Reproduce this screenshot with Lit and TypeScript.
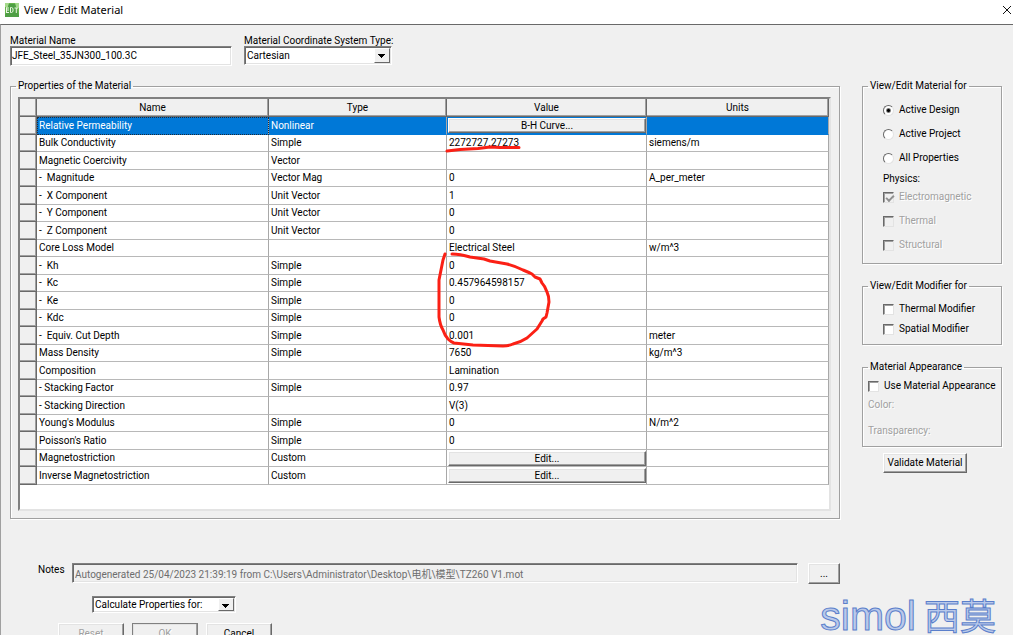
import { LitElement, html, css, nothing } from "lit";
import { customElement, property } from "lit/decorators.js";

type Row = { name: string; type?: string; value?: string; units?: string; edit?: boolean; selected?: boolean };

const ROWS: Row[] = [
  { name: "Relative Permeability", type: "Nonlinear", value: "B-H Curve...", edit: true, selected: true },
  { name: "Bulk Conductivity", type: "Simple", value: "2272727.27273", units: "siemens/m" },
  { name: "Magnetic Coercivity", type: "Vector" },
  { name: "-  Magnitude", type: "Vector Mag", value: "0", units: "A_per_meter" },
  { name: "-  X Component", type: "Unit Vector", value: "1" },
  { name: "-  Y Component", type: "Unit Vector", value: "0" },
  { name: "-  Z Component", type: "Unit Vector", value: "0" },
  { name: "Core Loss Model", value: "Electrical Steel", units: "w/m^3" },
  { name: "-  Kh", type: "Simple", value: "0" },
  { name: "-  Kc", type: "Simple", value: "0.457964598157" },
  { name: "-  Ke", type: "Simple", value: "0" },
  { name: "-  Kdc", type: "Simple", value: "0" },
  { name: "-  Equiv. Cut Depth", type: "Simple", value: "0.001", units: "meter" },
  { name: "Mass Density", type: "Simple", value: "7650", units: "kg/m^3" },
  { name: "Composition", value: "Lamination" },
  { name: "- Stacking Factor", type: "Simple", value: "0.97" },
  { name: "- Stacking Direction", value: "V(3)" },
  { name: "Young's Modulus", type: "Simple", value: "0", units: "N/m^2" },
  { name: "Poisson's Ratio", type: "Simple", value: "0" },
  { name: "Magnetostriction", type: "Custom", value: "Edit...", edit: true },
  { name: "Inverse Magnetostriction", type: "Custom", value: "Edit...", edit: true },
];

const base = css`
  * { box-sizing: border-box; }
  button, input, select {
    font: inherit;
    color: inherit;
    margin: 0;
    border-radius: 0;
    appearance: none;
    outline: none;
  }
  button {
    display: block;
    padding: 0;
    background: #f0f0f0;
    border: 1px solid;
    border-color: #fff #696969 #696969 #fff;
    box-shadow: inset -1px -1px #a0a0a0, inset 1px 1px #e3e3e3;
    text-align: center;
    white-space: nowrap;
  }
`;

@customElement("material-table")
class MaterialTable extends LitElement {
  static styles = [
    base,
    css`
      :host { display: block; }
      .panel {
        background: #fff;
        border: 2px solid;
        border-color: #808080 #e3e3e3 #e3e3e3 #808080;
        padding-bottom: 24px;
      }
      table {
        width: 100%;
        table-layout: fixed;
        border-collapse: separate;
        border-spacing: 0;
      }
      .c-head { width: 17px; }
      .c-type { width: 178px; }
      .c-value { width: 200px; }
      .c-units { width: 182px; }
      th {
        height: 18px;
        padding: 0;
        font-weight: normal;
        line-height: 16px;
        background: #f0f0f0;
        border-right: 1px solid #696969;
        border-bottom: 1px solid #696969;
        box-shadow: inset -1px -1px #a0a0a0;
      }
      .value { position: relative; }
      tbody tr { height: 17px; }
      tbody tr:nth-child(odd) { height: 18px; }
      td {
        padding: 0 1px 0 2px;
        line-height: 14px;
        white-space: pre;
        border-right: 1px solid #a8a8a8;
        border-bottom: 1px solid #b8b8b8;
      }
      tbody th { height: auto; }
      .selected td { background: #0078d7; color: #fff; border-bottom-color: #0078d7; }
      .selected .name { outline: 1px dotted #1c2a3a; outline-offset: -1px; }
      .has-button { padding: 0 0 0 1px; }
      .has-button button { width: 100%; height: 15px; line-height: 11px; color: #000; }
      .mark {
        position: absolute;
        left: -11px;
        top: 0;
        z-index: 1;
        pointer-events: none;
        fill: none;
        stroke: #fb2015;
        stroke-width: 3;
        stroke-linecap: round;
        stroke-linejoin: round;
      }
    `,
  ];

  render() {
    return html`
      <div class="panel">
        <table>
          <colgroup>
            <col class="c-head" /><col /><col class="c-type" /><col class="c-value" /><col class="c-units" />
          </colgroup>
          <thead>
            <tr>
              <th></th><th>Name</th><th>Type</th>
              <th class="value">
                Value
                <svg class="mark" width="120" height="255" aria-hidden="true">
                  <path d="M11 52 L24 50.500 L42 49.500 L54 48 L64 48.500 L83 48.500" />
                  <path d="M9 155 L7 161 L3 181 L3 218 Q4 226 7 231 Q9 237 12 240 Q15 243 18 244 L37 246 L67 247 Q73 247 77 245 Q85 243 91 239 L101 230 L106 222 L107 220 L110 218 L111 214 L113 203 Q113 197 111 193 Q109 187 106 184 L104 180 L99 178 L96 175 Q92 173 87 171 Q79 167 71 165 L54 162 L48 160 L34 158 Q24 155 16 155" />
                </svg>
              </th>
              <th>Units</th>
            </tr>
          </thead>
          <tbody>
            ${ROWS.map(
              (r) => html`<tr class=${r.selected ? "selected" : ""}>
                <th></th>
                <td class="name">${r.name}</td>
                <td>${r.type ?? nothing}</td>
                ${r.edit
                  ? html`<td class="has-button"><button type="button">${r.value}</button></td>`
                  : html`<td>${r.value ?? nothing}</td>`}
                <td>${r.units ?? nothing}</td>
              </tr>`
            )}
          </tbody>
        </table>
      </div>
    `;
  }
}

@customElement("app-root")
class AppRoot extends LitElement {
  @property() materialName = "JFE_Steel_35JN300_100.3C";

  static styles = [
    base,
    css`
      :host {
        display: block;
        height: 100vh;
        overflow: hidden;
        position: relative;
        background: #f0f0f0;
        color: #000;
        font: 10px/12px Roboto, "Liberation Sans", "Noto Sans CJK SC", sans-serif;
      }
      .titlebar {
        display: flex;
        align-items: center;
        height: 24px;
        padding: 0 0 4px 5px;
        gap: 5px;
        background: #fff;
        font: 11px/16px "Noto Sans", sans-serif;
      }
      .titlebar h1 { margin: 0; font: inherit; flex: 1; }
      .titlebar .close {
        width: 14px;
        height: 14px;
        background: none;
        border: 0;
        box-shadow: none;
      }
      .titlebar svg { display: block; }
      .body {
        border-top: 1px solid #696969;
        border-left: 1px solid #a0a0a0;
        min-height: calc(100vh - 24px);
        padding: 10px 11px 0 9px;
      }
      .top { display: flex; gap: 12px; margin-bottom: 14px; }
      .field label { display: block; line-height: 11px; white-space: nowrap; }
      .sunken {
        display: block;
        background: #fff;
        border: 1px solid;
        border-color: #808080 #fff #fff #808080;
        box-shadow: inset 1px 1px #696969, inset -1px -1px #e3e3e3;
      }
      .name-input { width: 222px; height: 20px; padding: 0 2px 2px 1px; }
      .combo { position: relative; width: 148px; }
      .combo select { width: 100%; height: 19px; padding: 0 20px 0 2px; }
      .combo::after {
        content: "";
        position: absolute;
        right: 2px;
        top: 2px;
        bottom: 2px;
        width: 14px;
        pointer-events: none;
        border: 1px solid;
        border-color: #fff #696969 #696969 #fff;
        background: linear-gradient(#000, #000) 3px 5px / 7px 1px no-repeat,
          linear-gradient(#000, #000) 4px 6px / 5px 1px no-repeat,
          linear-gradient(#000, #000) 5px 7px / 3px 1px no-repeat,
          linear-gradient(#000, #000) 6px 8px / 1px 1px no-repeat, #f0f0f0;
      }
      .columns { display: grid; grid-template-columns: minmax(0, 1fr) 140px; column-gap: 22px; }
      fieldset {
        margin: 0;
        min-width: 0;
        border: 1px solid #a0a0a0;
        box-shadow: 1px 1px #fff, inset 1px 1px #fff;
        padding: 0;
      }
      legend { padding: 0 2px; margin-left: 5px; line-height: 12px; }
      .properties { padding: 5px 8px 7px 7px; }
      .side { display: flex; flex-direction: column; gap: 16px; }
      .option { display: flex; align-items: center; gap: 5px; height: 12px; white-space: nowrap; }
      .scope { padding: 12px 0 12px 20px; }
      .stack { display: grid; gap: 12px; }
      .physics { margin: 9px 0 6px; }
      .modifier { padding: 11px 0 9px 20px; display: grid; gap: 8px; }
      .appearance { padding: 7px 0 9px 5px; }
      .appearance .color { margin: 7px 0 14px; }
      .off { color: #a0a0a0; text-shadow: 1px 1px #fff; }
      input[type="checkbox"] {
        width: 11px;
        height: 11px;
        flex: none;
        background: #fff;
        border: 1px solid;
        border-color: #696969 #e3e3e3 #e3e3e3 #696969;
        box-shadow: inset 1px 1px #a0a0a0;
      }
      input[type="checkbox"]:disabled { background: #f0f0f0; }
      input[type="checkbox"]:checked::before {
        content: "";
        display: block;
        width: 6px;
        height: 3px;
        margin: 2px 0 0 2px;
        border: solid #909090;
        border-width: 0 0 2px 2px;
        transform: rotate(-45deg);
      }
      input[type="radio"] {
        width: 11px;
        height: 11px;
        flex: none;
        border-radius: 50%;
        background: #fff;
        border: 1px solid;
        border-color: #696969 #e3e3e3 #e3e3e3 #696969;
      }
      input[type="radio"]:checked { background: radial-gradient(circle, #000 1px, #fff 3px); }
      .validate { width: 84px; height: 20px; margin: -10px 0 0 21px; }
      .notes { display: flex; align-items: flex-start; margin: 44px 0 12px; padding-left: 28px; }
      .notes label { width: 34px; padding-top: 1px; }
      .notes input { flex: 1; min-width: 0; height: 20px; padding: 0 2px; background: #f0f0f0; color: #6d6d6d; }
      .notes button { width: 32px; height: 21px; margin-left: 10px; }
      .calc { width: 144px; margin: 0 0 10px 82px; }
      .calc select { height: 17px; }
      .actions { display: flex; gap: 8px; padding-left: 48px; }
      .actions button { width: 66px; height: 21px; }
      .actions button:disabled { color: #a0a0a0; text-shadow: 1px 1px #fff; }
      .actions .ok { border-color: #808080; }
      .brand {
        position: absolute;
        right: 17px;
        bottom: 0;
        display: flex;
        align-items: baseline;
        gap: 8px;
        color: #b9c9ea;
        -webkit-text-stroke: 1px #5b7fcb;
        font: 41px/38px "Liberation Sans", Arial, sans-serif;
      }
      .brand .cjk { font: 36px/38px "Noto Sans CJK SC", sans-serif; }
    `,
  ];

  private check(label: string, disabled = false, checked = false) {
    return html`<label class="option ${disabled ? "off" : ""}">
      <input type="checkbox" ?disabled=${disabled} ?checked=${checked} />${label}</label>`;
  }

  private radio(label: string, checked = false) {
    return html`<label class="option"><input type="radio" name="scope" ?checked=${checked} />${label}</label>`;
  }

  render() {
    return html`
      <header class="titlebar">
        <svg width="14" height="14" viewBox="0 0 14 14" aria-hidden="true">
          <rect width="14" height="14" fill="#69b64c" />
          <path d="M0 0 H4 L3 4 H0 Z M10 0 H14 V5 L11 4 Z" fill="#a5d98c" />
          <path d="M4 1 H10 L14 12 V14 H0 V12 Z" fill="#4f9f45" />
          <path d="M1.500 4.500 V9.500 M1 5 H4 M1 7 H4 M1 9.500 H4 M5.500 4.500 V9.500 H6.500 L8 8.500 V5.500 L6.500 4.500 Z M9.500 5 H13 M11.300 5 V10" fill="none" stroke="#eaf8e2" />
        </svg>
        <h1>View / Edit Material</h1>
        <button class="close" type="button" aria-label="Close">
          <svg width="14" height="14" viewBox="0 0 14 14"><path d="M4 3 L12 11 M12 3 L4 11" stroke="#111" fill="none" /></svg>
        </button>
      </header>
      <main class="body">
        <div class="top">
          <div class="field">
            <label for="name">Material Name</label>
            <input id="name" class="sunken name-input" .value=${this.materialName} />
          </div>
          <div class="field">
            <label for="coords">Material Coordinate System Type:</label>
            <div class="combo">
              <select id="coords" class="sunken"><option>Cartesian</option></select>
            </div>
          </div>
        </div>
        <div class="columns">
          <div>
            <fieldset>
              <legend>Properties of the Material</legend>
              <div class="properties"><material-table></material-table></div>
            </fieldset>
            <div class="notes">
              <label for="notes">Notes</label>
              <input id="notes" class="sunken" readonly
                value="Autogenerated 25/04/2023 21:39:19 from C:\\Users\\Administrator\\Desktop\\电机\\模型\\TZ260 V1.mot" />
              <button type="button">...</button>
            </div>
            <div class="combo calc">
              <select class="sunken" aria-label="Calculate Properties for"><option>Calculate Properties for:</option></select>
            </div>
            <div class="actions">
              <button type="button" disabled>Reset</button>
              <button type="button" class="ok" disabled>OK</button>
              <button type="button">Cancel</button>
            </div>
          </div>
          <div class="side">
            <fieldset>
              <legend>View/Edit Material for</legend>
              <div class="scope">
                <div class="stack">
                  ${this.radio("Active Design", true)} ${this.radio("Active Project")} ${this.radio("All Properties")}
                </div>
                <div class="physics">Physics:</div>
                <div class="stack">
                  ${this.check("Electromagnetic", true, true)} ${this.check("Thermal", true)}
                  ${this.check("Structural", true)}
                </div>
              </div>
            </fieldset>
            <fieldset>
              <legend>View/Edit Modifier for</legend>
              <div class="modifier">
                ${this.check("Thermal Modifier")} ${this.check("Spatial Modifier")}
              </div>
            </fieldset>
            <fieldset>
              <legend>Material Appearance</legend>
              <div class="appearance">
                ${this.check("Use Material Appearance")}
                <div class="color off">Color:</div>
                <div class="off">Transparency:</div>
              </div>
            </fieldset>
            <button type="button" class="validate">Validate Material</button>
          </div>
        </div>
      </main>
      <div class="brand"><span>simol</span><span class="cjk">西莫</span></div>
    `;
  }
}
